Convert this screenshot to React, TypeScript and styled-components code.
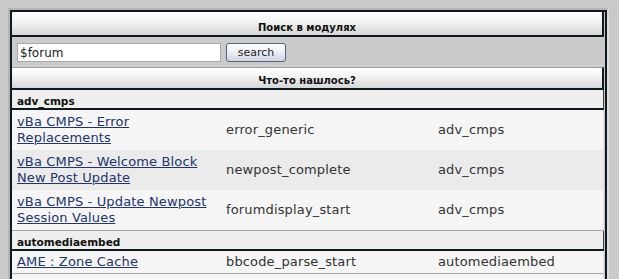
import React from "react";
import styled, { createGlobalStyle } from "styled-components";

const Global = createGlobalStyle`
  html, body { margin: 0; padding: 0; }
  body {
    background: #c9c9c9;
    font-family: "DejaVu Sans", Verdana, sans-serif;
    color: #333;
  }
`;

const Page = styled.div`
  padding: 8px 0 0 8px;
`;

const Frame = styled.div`
  width: 597px;
  border: 2px solid;
  border-color: #b4b4b4 #dedede #dedede #b4b4b4;
`;

const Panel = styled.div`
  border: 2px solid #0e1920;
  border-bottom: none;
  background: #c9c9c9;
  padding-right: 1px;
  display: flex;
  flex-direction: column;
`;

const Header = styled.div<{ $first?: boolean }>`
  box-sizing: border-box;
  height: ${(p) => (p.$first ? 25 : 23)}px;
  padding-bottom: 1px;
  border-top: ${(p) => (p.$first ? "none" : "1px solid #9c9c9c")};
  border-right: 2px solid #0e1920;
  border-bottom: 2px solid #0e1920;
  background: linear-gradient(#ffffff 0%, #f3f3f3 40%, #d6d6d6 100%);
  display: flex;
  align-items: flex-end;
  justify-content: center;
  font-size: 10px;
  line-height: 12px;
  font-weight: bold;
  color: #111;
`;

const SearchRow = styled.div`
  display: flex;
  align-items: center;
  gap: 5px;
  padding: 6px 5px 5px 5px;
  background: #cbcbcb;
`;

const Input = styled.input`
  box-sizing: border-box;
  width: 204px;
  height: 19px;
  border: 1px solid #a9a9a9;
  background: #fff;
  padding: 0 2px;
  margin: 0;
  font-family: "DejaVu Sans", Verdana, sans-serif;
  font-size: 12px;
  color: #222;
  outline: none;
`;

const Button = styled.button`
  box-sizing: border-box;
  width: 60px;
  height: 19px;
  margin: 0;
  padding: 0;
  border: 1px solid #56647c;
  border-radius: 3px;
  background: linear-gradient(#ffffff 0%, #eef0f5 45%, #cfd5e1 100%);
  font-family: "DejaVu Sans", Verdana, sans-serif;
  font-size: 11px;
  color: #222;
`;

const Group = styled.div`
  box-sizing: border-box;
  height: 20px;
  padding: 3px 5px 0 5px;
  display: flex;
  align-items: center;
  background: #efefef;
  border-right: 1px solid #3a3a3a;
  border-bottom: 2px solid #0e1920;
  font-size: 10.5px;
  font-weight: bold;
  color: #111;
`;

const Row = styled.div<{ $alt?: boolean; $line?: boolean }>`
  display: grid;
  grid-template-columns: 209px 212px 1fr;
  align-items: center;
  background: ${(p) => (p.$alt ? "#ebebeb" : "#f5f5f5")};
  border-bottom: ${(p) => (p.$line ? "1px solid #a9a9a9" : "none")};
  border-right: 1px solid #e2e2e2;
  font-size: 13px;
  line-height: 16px;
  letter-spacing: 0.15px;
`;

const Cell = styled.div<{ $pad: number }>`
  padding: ${(p) => p.$pad}px 5px;
  color: #333;
`;

const Link = styled.a`
  color: #22346a;
  text-decoration: underline;
`;

const Continuation = styled.div`
  height: 12px;
  background: #f5f5f5;
  border-right: 1px solid #e2e2e2;
`;

type Item = { title: string; hook: string; product: string };
type Section = { name: string; pad: number; items: Item[] };

const data: Section[] = [
  {
    name: "adv_cmps",
    pad: 4,
    items: [
      { title: "vBa CMPS - Error Replacements", hook: "error_generic", product: "adv_cmps" },
      { title: "vBa CMPS - Welcome Block New Post Update", hook: "newpost_complete", product: "adv_cmps" },
      { title: "vBa CMPS - Update Newpost Session Values", hook: "forumdisplay_start", product: "adv_cmps" },
    ],
  },
  {
    name: "automediaembed",
    pad: 3,
    items: [
      { title: "AME : Zone Cache", hook: "bbcode_parse_start", product: "automediaembed" },
    ],
  },
];

export default function App() {
  return (
    <Page>
      <Global />
      <Frame>
        <Panel>
          <Header $first>Поиск в модулях</Header>
          <SearchRow>
            <Input defaultValue="$forum" />
            <Button>search</Button>
          </SearchRow>
          <Header>Что-то нашлось?</Header>
          {data.map((s) => (
            <React.Fragment key={s.name}>
              <Group>{s.name}</Group>
              {s.items.map((it, i) => (
                <Row key={it.title} $alt={i % 2 === 1} $line={i === s.items.length - 1}>
                  <Cell $pad={s.pad}>
                    <Link href="#">{it.title}</Link>
                  </Cell>
                  <Cell $pad={s.pad}>{it.hook}</Cell>
                  <Cell $pad={s.pad}>{it.product}</Cell>
                </Row>
              ))}
            </React.Fragment>
          ))}
          <Continuation />
        </Panel>
      </Frame>
    </Page>
  );
}
